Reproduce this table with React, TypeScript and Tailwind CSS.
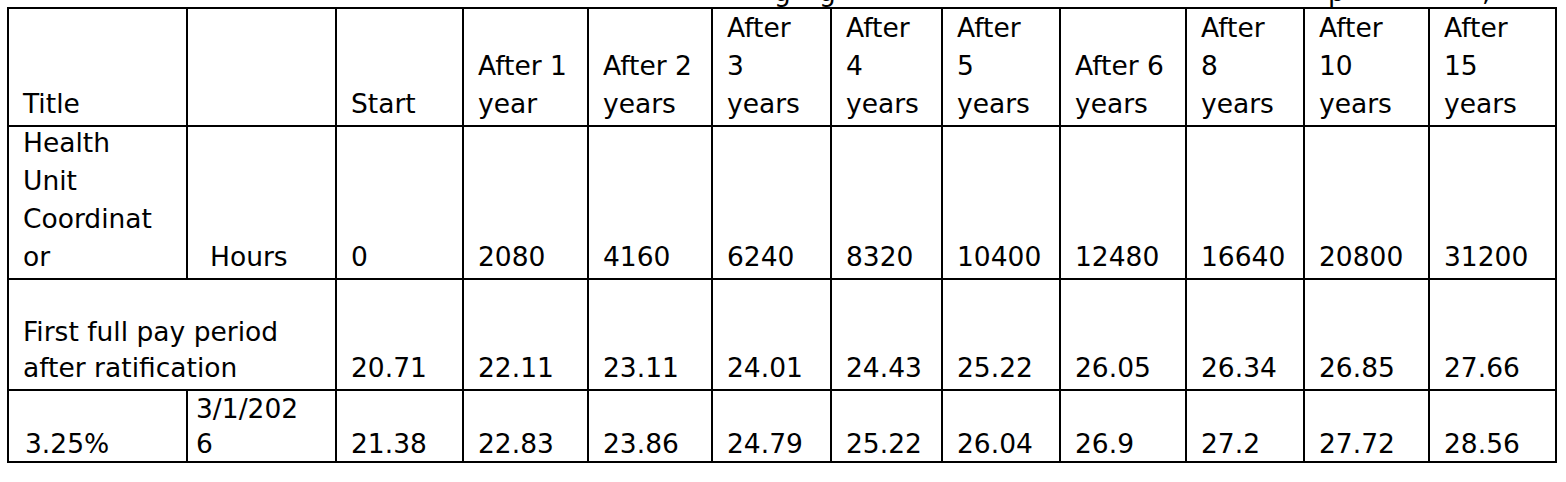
import React from "react";

const widths = [177, 147, 125, 123, 122, 117, 109, 116, 124, 116, 123, 125];

type Cell = { text: string; span?: number; pl?: number; lh?: number; pb?: number };

const rows: { h: number; lh: number; pb: number; cells: Cell[] }[] = [
  {
    h: 116,
    lh: 38,
    pb: 2,
    cells: [
      { text: "Title" },
      { text: "" },
      { text: "Start" },
      { text: "After 1\nyear" },
      { text: "After 2\nyears" },
      { text: "After\n3\nyears" },
      { text: "After\n4\nyears" },
      { text: "After\n5\nyears" },
      { text: "After 6\nyears" },
      { text: "After\n8\nyears" },
      { text: "After\n10\nyears" },
      { text: "After\n15\nyears" },
    ],
  },
  {
    h: 151,
    lh: 38,
    pb: 2,
    cells: [
      { text: "Health\nUnit\nCoordinat\nor" },
      { text: "Hours", pl: 22 },
      { text: "0" },
      { text: "2080" },
      { text: "4160" },
      { text: "6240" },
      { text: "8320" },
      { text: "10400" },
      { text: "12480" },
      { text: "16640" },
      { text: "20800" },
      { text: "31200" },
    ],
  },
  {
    h: 109,
    lh: 38,
    pb: 2,
    cells: [
      { text: "First full pay period\nafter ratification", span: 2, lh: 36, pb: 3 },
      { text: "20.71" },
      { text: "22.11" },
      { text: "23.11" },
      { text: "24.01" },
      { text: "24.43" },
      { text: "25.22" },
      { text: "26.05" },
      { text: "26.34" },
      { text: "26.85" },
      { text: "27.66" },
    ],
  },
  {
    h: 70,
    lh: 35,
    pb: 0,
    cells: [
      { text: "3.25%", pl: 16 },
      { text: "3/1/202\n6", pl: 8 },
      { text: "21.38" },
      { text: "22.83" },
      { text: "23.86" },
      { text: "24.79" },
      { text: "25.22" },
      { text: "26.04" },
      { text: "26.9" },
      { text: "27.2" },
      { text: "27.72" },
      { text: "28.56" },
    ],
  },
];

export default function App() {
  return (
    <div
      className="w-[1566px] h-[482px] bg-white text-black overflow-hidden"
      style={{ fontFamily: '"DejaVu Sans", "Liberation Sans", sans-serif' }}
    >
      <div className="relative h-[7px] overflow-hidden text-[26.5px]">
        <span className="absolute left-[774px] bottom-0 leading-[31px]">g</span>
        <span className="absolute left-[819px] bottom-0 leading-[31px]">g</span>
        <span className="absolute left-[1328px] bottom-0 leading-[31px]">p</span>
        <span className="absolute left-[1482px] bottom-0 leading-[31px]">,</span>
      </div>
      <div
        className="ml-[7px] inline-grid gap-[2px] bg-black p-[2px]"
        style={{
          gridTemplateColumns: widths.map((w) => `${w}px`).join(" "),
          gridTemplateRows: rows.map((r) => `${r.h}px`).join(" "),
        }}
      >
        {rows.map((r, ri) =>
          r.cells.map((c, ci) => (
            <div
              key={`${ri}-${ci}`}
              className="bg-white flex flex-col justify-end text-[26.5px] whitespace-pre"
              style={{
                gridColumn: c.span ? `span ${c.span}` : undefined,
                paddingLeft: c.pl ?? 14,
                paddingBottom: c.pb ?? r.pb,
                lineHeight: `${c.lh ?? r.lh}px`,
              }}
            >
              {c.text}
            </div>
          ))
        )}
      </div>
    </div>
  );
}
